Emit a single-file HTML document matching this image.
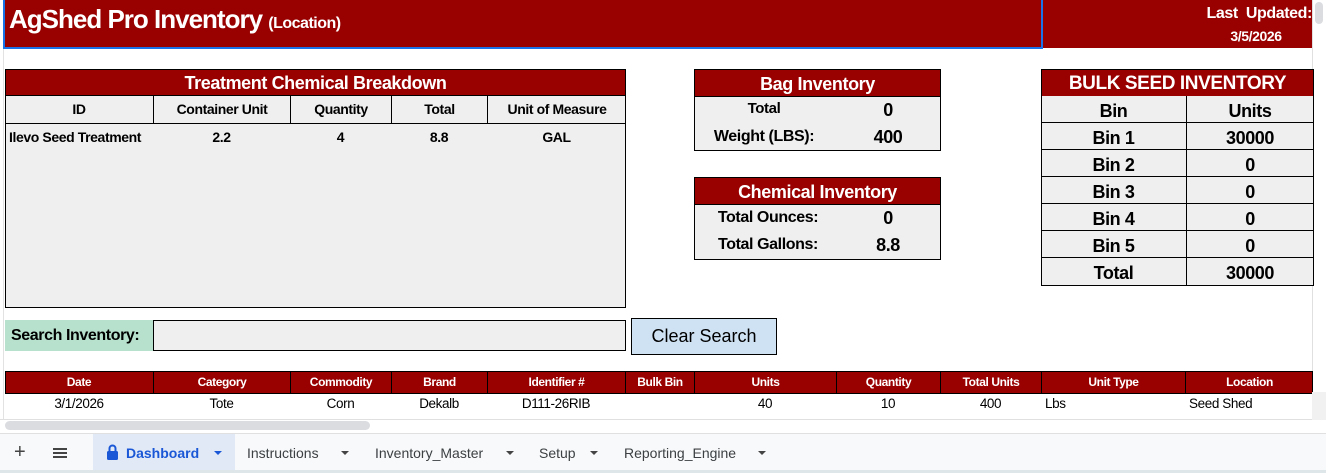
<!DOCTYPE html>
<html><head><meta charset="utf-8"><style>
*{box-sizing:border-box;margin:0;padding:0}
body{width:1326px;height:473px;overflow:hidden;background:#fff;font-family:"Liberation Sans",Arial,sans-serif;position:relative;color:#000}
.a{position:absolute}
.red{background:#990000;color:#fff;font-weight:bold;text-align:center}
.gray{background:#efefef}
.b{font-weight:bold}
.c{text-align:center}
.n{letter-spacing:-0.4px}
</style></head><body>
<div class="a" style="left:0;top:0;width:4px;height:430px;border-right:1px solid #e2e2e2"></div>
<div class="a" style="left:3px;top:0;width:1040px;height:49px;background:#990000;border:2px solid #1a73e8;border-top:none"></div>
<div class="a b n" style="left:9px;top:4px;color:#fff;font-size:26px;letter-spacing:-1px">AgShed Pro Inventory <span style="font-size:16px;letter-spacing:-0.5px">(Location)</span></div>
<div class="a" style="left:1043px;top:0;width:269px;height:48px;background:#990000"></div>
<div class="a b n" style="left:1180px;top:5px;width:132px;text-align:right;color:#fff;font-size:16px">Last&nbsp; Updated:</div>
<div class="a b n" style="left:1200px;top:28px;width:112px;text-align:center;color:#fff;font-size:14px">3/5/2026</div>
<div class="a" style="left:1312px;top:0;width:14px;height:433px;background:#fff;border-left:1px solid #e0e0e0"></div>
<div class="a" style="left:1315px;top:2px;width:8px;height:22px;background:#dadce0;border-radius:4px"></div>

<div class="a gray" style="left:5px;top:69px;width:621px;height:239px;border:1px solid #000"></div>
<div class="a red n" style="left:5px;top:69px;width:621px;height:27px;font-size:18px;line-height:27px;border:1px solid #000">Treatment Chemical Breakdown</div>
<div class="a" style="left:5px;top:96px;width:621px;height:28px;border:1px solid #000;border-top:none"></div>
<div class="a b n c" style="left:5px;top:96px;width:148px;height:28px;line-height:27px;font-size:14px">ID</div>
<div class="a b n c" style="left:153px;top:96px;width:137px;height:28px;line-height:27px;font-size:14px;border-left:1px solid #000">Container Unit</div>
<div class="a b n c" style="left:290px;top:96px;width:101px;height:28px;line-height:27px;font-size:14px;border-left:1px solid #000">Quantity</div>
<div class="a b n c" style="left:391px;top:96px;width:96px;height:28px;line-height:27px;font-size:14px;border-left:1px solid #000">Total</div>
<div class="a b n c" style="left:487px;top:96px;width:139px;height:28px;line-height:27px;font-size:14px;border-left:1px solid #000">Unit of Measure</div>
<div class="a b n" style="left:9px;top:129px;font-size:14px">Ilevo Seed Treatment</div>
<div class="a b n c" style="left:153px;top:129px;width:137px;font-size:14px">2.2</div>
<div class="a b n c" style="left:290px;top:129px;width:101px;font-size:14px">4</div>
<div class="a b n c" style="left:391px;top:129px;width:96px;font-size:14px">8.8</div>
<div class="a b n c" style="left:487px;top:129px;width:139px;font-size:14px">GAL</div>

<div class="a gray" style="left:694px;top:69px;width:247px;height:82px;border:1px solid #000"></div>
<div class="a red n" style="left:694px;top:69px;width:247px;height:28px;font-size:18px;line-height:28px;border:1px solid #000">Bag Inventory</div>
<div class="a b n c" style="left:700px;top:100px;width:128px;font-size:15px">Total</div>
<div class="a b n c" style="left:840px;top:100px;width:96px;font-size:18px">0</div>
<div class="a b n c" style="left:700px;top:128px;width:128px;font-size:16px">Weight (LBS):</div>
<div class="a b n c" style="left:840px;top:127px;width:96px;font-size:18px">400</div>

<div class="a gray" style="left:694px;top:177px;width:247px;height:83px;border:1px solid #000"></div>
<div class="a red n" style="left:694px;top:177px;width:247px;height:28px;font-size:18px;line-height:28px;border:1px solid #000">Chemical Inventory</div>
<div class="a b n c" style="left:700px;top:209px;width:136px;font-size:16px">Total Ounces:</div>
<div class="a b n c" style="left:840px;top:208px;width:96px;font-size:18px">0</div>
<div class="a b n c" style="left:700px;top:236px;width:136px;font-size:16px">Total Gallons:</div>
<div class="a b n c" style="left:840px;top:235px;width:96px;font-size:18px">8.8</div>

<div class="a red n" style="left:1041px;top:69px;width:273px;height:28px;font-size:19px;line-height:28px;border:1px solid #000">BULK SEED INVENTORY</div>
<div class="a gray" style="left:1041px;top:96px;width:273px;height:190px;border:1px solid #000;border-top:none"></div>
<div class="a" style="left:1186px;top:96px;width:1px;height:190px;background:#000"></div>
<div class="a b n" style="left:1041px;top:96px;width:273px;font-size:18px">
<div style="height:27px;border-bottom:1px solid #000;display:flex;line-height:30px"><span style="width:145px;text-align:center">Bin</span><span style="flex:1;text-align:center">Units</span></div>
<div style="height:27px;border-bottom:1px solid #000;display:flex;line-height:30px"><span style="width:145px;text-align:center">Bin 1</span><span style="flex:1;text-align:center">30000</span></div>
<div style="height:27px;border-bottom:1px solid #000;display:flex;line-height:30px"><span style="width:145px;text-align:center">Bin 2</span><span style="flex:1;text-align:center">0</span></div>
<div style="height:27px;border-bottom:1px solid #000;display:flex;line-height:30px"><span style="width:145px;text-align:center">Bin 3</span><span style="flex:1;text-align:center">0</span></div>
<div style="height:27px;border-bottom:1px solid #000;display:flex;line-height:30px"><span style="width:145px;text-align:center">Bin 4</span><span style="flex:1;text-align:center">0</span></div>
<div style="height:27px;border-bottom:1px solid #000;display:flex;line-height:30px"><span style="width:145px;text-align:center">Bin 5</span><span style="flex:1;text-align:center">0</span></div>
<div style="height:27px;display:flex;line-height:30px"><span style="width:145px;text-align:center">Total</span><span style="flex:1;text-align:center">30000</span></div>
</div>

<div class="a b n" style="left:5px;top:320px;width:148px;height:31px;background:#b7e1cd;font-size:16px;line-height:31px;padding-left:6px">Search Inventory:</div>
<div class="a" style="left:153px;top:320px;width:473px;height:31px;background:#efefef;border:1px solid #000"></div>
<div class="a c" style="left:631px;top:318px;width:146px;height:37px;background:#cfe2f3;border:1px solid #000;font-size:18px;line-height:35px">Clear Search</div>

<div class="a" style="left:5px;top:371px;width:1308px;height:23px;background:#990000;border:1px solid #000"></div>
<div class="a b n" style="left:5px;top:371px;width:1308px;height:23px;color:#fff;font-size:12px;line-height:23px">
<span class="a c" style="left:0;width:148px">Date</span>
<span class="a c" style="left:148px;width:137px;border-left:1px solid #000">Category</span>
<span class="a c" style="left:285px;width:101px;border-left:1px solid #000">Commodity</span>
<span class="a c" style="left:386px;width:96px;border-left:1px solid #000">Brand</span>
<span class="a c" style="left:482px;width:138px;border-left:1px solid #000">Identifier #</span>
<span class="a c" style="left:620px;width:69px;border-left:1px solid #000">Bulk Bin</span>
<span class="a c" style="left:689px;width:142px;border-left:1px solid #000">Units</span>
<span class="a c" style="left:831px;width:104px;border-left:1px solid #000">Quantity</span>
<span class="a c" style="left:935px;width:101px;border-left:1px solid #000">Total Units</span>
<span class="a c" style="left:1036px;width:144px;border-left:1px solid #000">Unit Type</span>
<span class="a c" style="left:1180px;width:128px;border-left:1px solid #000">Location</span>
</div>
<div class="a n" style="left:5px;top:394px;width:1308px;height:26px;font-size:13.5px;line-height:19px;overflow:hidden">
<span class="a c" style="left:0;width:148px">3/1/2026</span>
<span class="a c" style="left:148px;width:137px">Tote</span>
<span class="a c" style="left:285px;width:101px">Corn</span>
<span class="a c" style="left:386px;width:96px">Dekalb</span>
<span class="a c" style="left:482px;width:138px">D111-26RIB</span>
<span class="a c" style="left:689px;width:142px">40</span>
<span class="a c" style="left:831px;width:104px">10</span>
<span class="a c" style="left:935px;width:101px">400</span>
<span class="a" style="left:1040px">Lbs</span>
<span class="a" style="left:1184px">Seed Shed</span>
</div>
<div class="a" style="left:0;top:419px;width:1313px;height:14px;background:#fff;border-top:1px solid #e0e0e0"></div>
<div class="a" style="left:5px;top:421px;width:365px;height:9px;background:#dadce0;border-radius:5px"></div>
<div class="a" style="left:1312px;top:392px;width:14px;height:28px;background:#f1f1f1"></div>

<div class="a" style="left:0;top:433px;width:1326px;height:40px;background:#f8f9fa;border-top:1px solid #e0e0e0"></div>
<div class="a" style="left:0;top:470px;width:1326px;height:3px;background:#dfe6e9"></div>
<div class="a" style="left:14px;top:441px;font-size:20px;color:#444">+</div>
<div class="a" style="left:53px;top:448px;width:14px;height:2px;background:#444;box-shadow:0 4px 0 #444,0 8px 0 #444"></div>
<div class="a" style="left:93px;top:434px;width:142px;height:36px;background:#e1e9f7"></div>
<svg class="a" style="left:106px;top:444px" width="13" height="17" viewBox="0 0 13 17"><path d="M3.5 7V4.5a3 3 0 0 1 6 0V7" stroke="#1a57d6" stroke-width="2" fill="none"/><rect x="1" y="7" width="11" height="9" rx="1.5" fill="#1a57d6"/></svg>
<div class="a b" style="left:126px;top:445px;font-size:14px;color:#1a57d6">Dashboard</div>
<div class="a" style="left:214px;top:451px;border:4px solid transparent;border-top:4px solid #1a57d6"></div>
<div class="a" style="left:247px;top:445px;font-size:14px;color:#3c4043">Instructions</div>
<div class="a" style="left:341px;top:451px;border:4px solid transparent;border-top:4px solid #444"></div>
<div class="a" style="left:375px;top:445px;font-size:14px;color:#3c4043">Inventory_Master</div>
<div class="a" style="left:506px;top:451px;border:4px solid transparent;border-top:4px solid #444"></div>
<div class="a" style="left:539px;top:445px;font-size:14px;color:#3c4043">Setup</div>
<div class="a" style="left:590px;top:451px;border:4px solid transparent;border-top:4px solid #444"></div>
<div class="a" style="left:624px;top:445px;font-size:14px;color:#3c4043">Reporting_Engine</div>
<div class="a" style="left:758px;top:451px;border:4px solid transparent;border-top:4px solid #444"></div>
</body></html>
